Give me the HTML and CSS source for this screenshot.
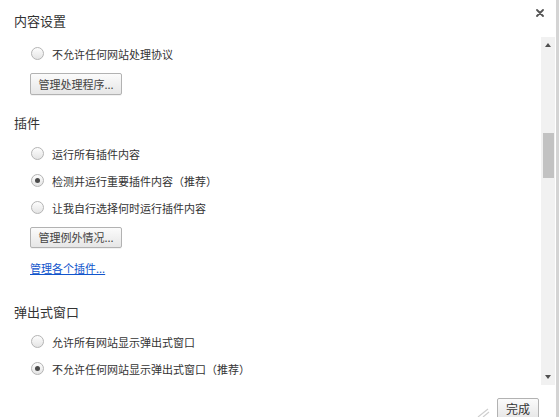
FILE: index.html
```html
<!DOCTYPE html>
<html lang="zh-CN">
<head>
<meta charset="utf-8">
<title>内容设置</title>
<link rel="stylesheet" href="styles.css">
</head>
<body>
<div class="dialog">
  <div class="header">
    <h1 class="title">内容设置</h1>
    <span class="close">
      <svg width="8" height="8" viewBox="0 0 8 8"><path d="M1 1L7 7M7 1L1 7" stroke="#555" stroke-width="1.8" stroke-linecap="round"/></svg>
    </span>
  </div>
  <div class="body">
    <div class="content">
      <div class="radio-row first"><span class="radio"></span><span class="label">不允许任何网站处理协议</span></div>
      <button class="btn btn-first">管理处理程序...</button>

      <h2 class="section">插件</h2>
      <div class="radio-row after-section"><span class="radio"></span><span class="label">运行所有插件内容</span></div>
      <div class="radio-row"><span class="radio checked"></span><span class="label">检测并运行重要插件内容（推荐）</span></div>
      <div class="radio-row"><span class="radio"></span><span class="label">让我自行选择何时运行插件内容</span></div>
      <button class="btn btn-second">管理例外情况...</button>
      <a class="link" href="#">管理各个插件...</a>

      <h2 class="section section-popup">弹出式窗口</h2>
      <div class="radio-row after-popup"><span class="radio"></span><span class="label">允许所有网站显示弹出式窗口</span></div>
      <div class="radio-row"><span class="radio checked"></span><span class="label">不允许任何网站显示弹出式窗口（推荐）</span></div>
    </div>
    <div class="scrollbar">
      <span class="arrow up"></span>
      <div class="track"><div class="thumb"></div></div>
      <span class="arrow down"></span>
    </div>
  </div>
  <div class="footer">
    <svg class="grip" width="14" height="12" viewBox="0 0 14 12"><path d="M2 11L12 3M7 11L13 6" stroke="#cfcfcf" stroke-width="1.2"/></svg>
    <button class="btn btn-done">完成</button>
  </div>
</div>
</body>
</html>
```
FILE: styles.css
```css
html, body {
  margin: 0;
  padding: 0;
  background: #ffffff;
}
body {
  font-family: "Noto Sans CJK SC", "Liberation Sans", sans-serif;
  color: #333333;
  font-size: 11px;
  overflow: hidden;
}
.dialog {
  width: 556px;
  height: 417px;
  border-right: 3px solid #d4d4d4;
  display: flex;
  flex-direction: column;
  overflow: hidden;
}
.header {
  height: 37px;
  display: flex;
  justify-content: space-between;
  align-items: flex-start;
  flex: none;
}
.title {
  margin: 11px 0 0 14px;
  font-size: 13px;
  font-weight: normal;
  line-height: 20px;
  color: #333;
}
.close {
  margin: 9px 12px 0 0;
  width: 8px;
  height: 8px;
  display: flex;
}
.body {
  height: 348px;
  display: flex;
  flex: none;
}
.content {
  flex: 1;
  overflow: hidden;
  display: flex;
  flex-direction: column;
  align-items: flex-start;
}
.radio-row {
  height: 27px;
  display: flex;
  align-items: center;
  margin-left: 31px;
}
.radio-row.first { margin-top: 3px; }
.radio-row.after-section { margin-top: 7px; }
.radio-row.after-popup { margin-top: 6px; }
.radio {
  width: 11px;
  height: 11px;
  border: 1px solid #b4b4b4;
  border-radius: 50%;
  background: linear-gradient(#fdfdfd, #e4e4e4);
  display: flex;
  align-items: center;
  justify-content: center;
  margin-right: 8px;
  flex: none;
}
.radio.checked::after {
  content: "";
  width: 5px;
  height: 5px;
  border-radius: 50%;
  background: #4a4a4a;
}
.label {
  line-height: 16px;
  color: #333;
}
.btn {
  font-family: "Noto Sans CJK SC", "Liberation Sans", sans-serif;
  font-size: 11px;
  color: #444;
  border: 1px solid #b2b2b2;
  border-radius: 2px;
  background: linear-gradient(#fbfbfb, #e6e6e6);
  padding: 0;
  box-shadow: 0 1px 0 rgba(0,0,0,0.05);
}
.btn-first, .btn-second {
  margin-left: 30px;
  width: 92px;
  height: 22px;
  line-height: 20px;
}
.btn-first { margin-top: 6px; }
.btn-second { margin-top: 6px; height: 21px; line-height: 19px; }
.link {
  margin: 12px 0 0 30px;
  color: #1155cc;
  line-height: 16px;
  text-decoration: underline;
}
.section {
  margin: 18px 0 0 14px;
  font-size: 13px;
  font-weight: normal;
  line-height: 20px;
  color: #333;
}
.section-popup { margin-top: 26px; }
.scrollbar {
  width: 14px;
  margin-right: 1px;
  background: #f1f1f1;
  display: flex;
  flex-direction: column;
  align-items: center;
  flex: none;
}
.arrow {
  width: 0;
  height: 0;
  border-left: 3.5px solid transparent;
  border-right: 3.5px solid transparent;
  flex: none;
}
.arrow.up {
  margin-top: 6px;
  border-bottom: 4px solid #505050;
}
.arrow.down {
  margin-bottom: 6px;
  border-top: 4px solid #505050;
}
.track {
  flex: 1;
  width: 100%;
  display: flex;
  flex-direction: column;
}
.thumb {
  margin: 86px 1px 0 2px;
  height: 45px;
  background: #c2c2c2;
}
.footer {
  flex: 1;
  display: flex;
  justify-content: flex-end;
  align-items: flex-start;
  gap: 7px;
  padding: 13px 17px 0 0;
}
.grip {
  margin-top: 8px;
}
.btn-done {
  width: 42px;
  height: 22px;
  line-height: 20px;
  font-size: 12px;
  color: #333;
}
```
